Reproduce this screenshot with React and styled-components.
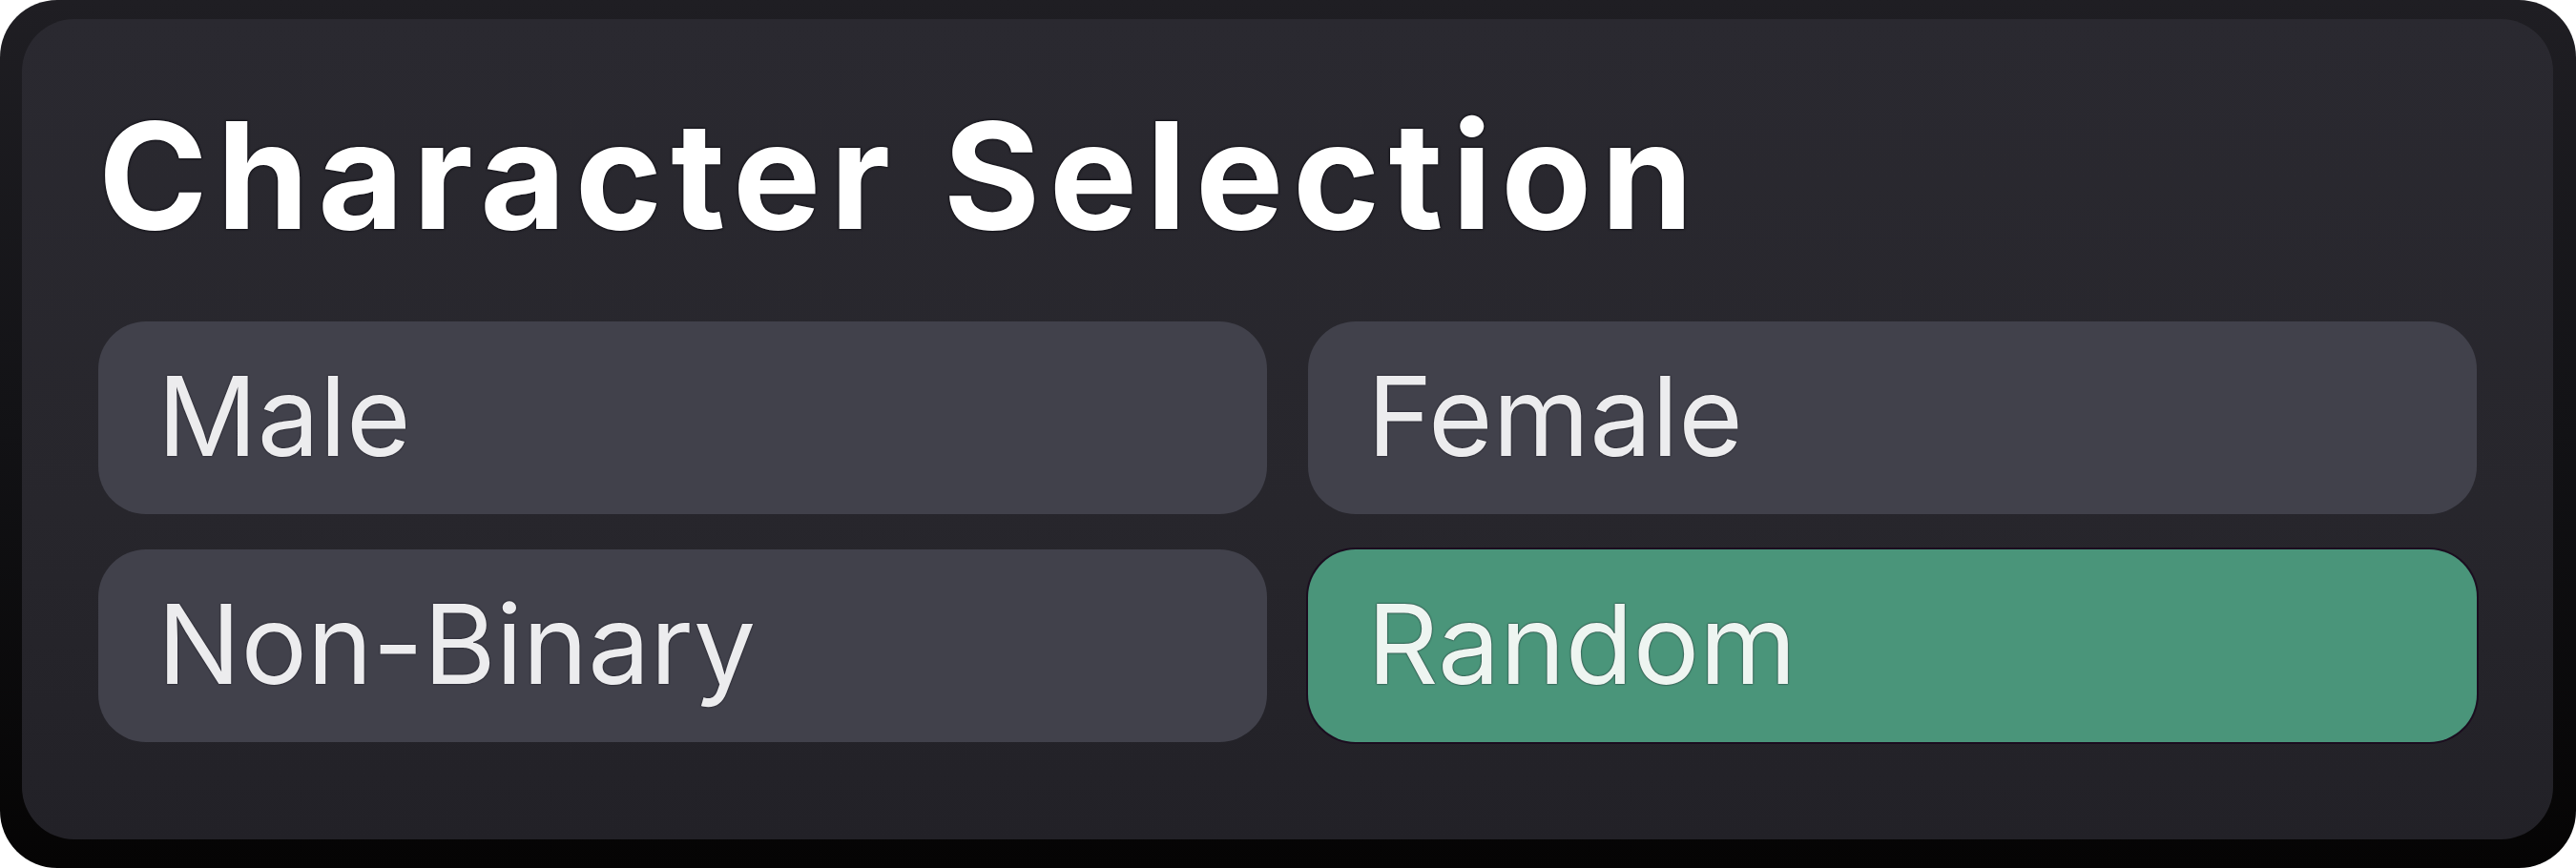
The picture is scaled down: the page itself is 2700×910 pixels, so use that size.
import React from "react";
import styled, { createGlobalStyle } from "styled-components";

const Global = createGlobalStyle`
  html, body { margin: 0; padding: 0; background: #ffffff; }
  #root { width: 2700px; height: 910px; }
`;

const Frame = styled.div`
  box-sizing: border-box;
  width: 2700px;
  height: 910px;
  padding: 20px 24px 30px 23px;
  border-radius: 60px;
  background: linear-gradient(180deg, #1f1e23 0%, #121215 50%, #050404 100%);
`;

const Panel = styled.section`
  box-sizing: border-box;
  height: 100%;
  padding: 70px 80px 0 80px;
  border-radius: 55px;
  background: linear-gradient(180deg, #2a2930 0%, #27262c 60%, #222127 100%);
  display: flex;
  flex-direction: column;
`;

const Title = styled.h1`
  margin: 0 0 59px 0;
  font-family: Inter, "Noto Sans", sans-serif;
  font-weight: 700;
  font-size: 155px;
  line-height: 188px;
  color: #ffffff;
  letter-spacing: 9.5px;
  text-shadow: 0 0 3px #0b0a10, 0 0 2px #0b0a10;
`;

const Grid = styled.div`
  display: grid;
  grid-template-columns: 1fr 1fr;
  grid-auto-rows: 202px;
  column-gap: 43px;
  row-gap: 37px;
`;

const Option = styled.button`
  box-sizing: border-box;
  display: flex;
  align-items: center;
  padding: 0 0 4px 62px;
  border: none;
  border-radius: 50px;
  background: ${(p) => (p.$active ? "#4a957a" : "#41414b")};
  box-shadow: ${(p) => (p.$active ? "0 0 0 2px #1b0d1f" : "none")};
  color: ${(p) => (p.$active ? "#eef5f1" : "#ececee")};
  font-family: Inter, "Noto Sans", sans-serif;
  font-weight: 400;
  font-size: 116px;
  line-height: 1;
  text-align: left;
  cursor: pointer;
  text-shadow: 0 0 2px #0d0b14;
`;

const options = [
  { label: "Male" },
  { label: "Female" },
  { label: "Non-Binary" },
  { label: "Random", active: true },
];

export default function App() {
  return (
    <>
      <Global />
      <Frame>
        <Panel>
          <Title>Character Selection</Title>
          <Grid>
            {options.map((o) => (
              <Option key={o.label} $active={o.active}>
                {o.label}
              </Option>
            ))}
          </Grid>
        </Panel>
      </Frame>
    </>
  );
}
